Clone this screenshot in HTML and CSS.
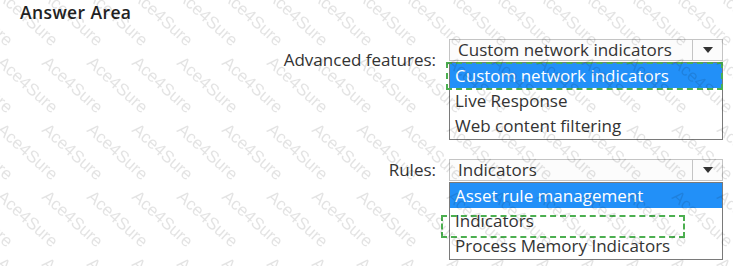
FILE: index.html
```html
<!DOCTYPE html>
<html lang="en">
<head>
    <meta charset='utf-8'>
    <title>Answer Area</title>
    <link rel="stylesheet" href="styles.css">
</head>
<body>

<h1 class="title">Answer Area</h1>

<div class="answers">
    <div class="field">
        <span class="label label-low">Advanced features:</span>
        <div class="picker">
            <div class="select">
                <span class="value">Custom network indicators</span>
                <span class="arrow"></span>
            </div>
            <ul class="list">
                <li class="option selected">Custom network indicators<span class="mark mark-first"></span></li>
                <li class="option">Live Response</li>
                <li class="option">Web content filtering</li>
            </ul>
        </div>
    </div>

    <div class="field">
        <span class="label">Rules:</span>
        <div class="picker">
            <div class="select">
                <span class="value">Indicators</span>
                <span class="arrow"></span>
            </div>
            <ul class="list">
                <li class="option selected">Asset rule management</li>
                <li class="option">Indicators<span class="mark mark-second"></span></li>
                <li class="option">Process Memory Indicators</li>
            </ul>
        </div>
    </div>
</div>

<!-- watermark over everything -->
<svg class="watermark" xmlns="http://www.w3.org/2000/svg">
    <defs>
        <pattern id="wm" width="45" height="67" patternUnits="userSpaceOnUse">
            <g class="wm-text">
                <text transform="translate(41 64) rotate(42)">Ace4Sure</text>
                <text transform="translate(-4 64) rotate(42)">Ace4Sure</text>
                <text transform="translate(-49 64) rotate(42)">Ace4Sure</text>
                <text transform="translate(41 -3) rotate(42)">Ace4Sure</text>
                <text transform="translate(-4 -3) rotate(42)">Ace4Sure</text>
                <text transform="translate(-49 -3) rotate(42)">Ace4Sure</text>
            </g>
        </pattern>
    </defs>
    <rect width="100%" height="100%" fill="url(#wm)"/>
</svg>

</body>
</html>
```

FILE: styles.css
```css
body {
    margin: 0;
    background: #FFFFFF;
    font-family: "Open Sans", sans-serif;
    color: #333333;
    position: relative;
    min-height: 266px;
}

.title {
    margin: 0;
    padding: 2px 20px 0;
    font-size: 17.5px;
    font-weight: 600;
    letter-spacing: 0.4px;
    line-height: 20px;
    color: #222222;
}

.answers {
    display: flex;
    flex-direction: column;
    gap: 19px;
    margin-top: 17px;
}

.field {
    display: flex;
    align-items: flex-start;
    gap: 13px;
}

.label {
    width: 436px;
    text-align: right;
    font-size: 17px;
    line-height: 22px;
}

.label-low {
    padding-top: 10px;
}

.picker {
    width: 274px;
}

.select {
    display: flex;
    height: 20px;
    border: 1px solid #c4c4c4;
    background: #FCFCFC;
    font-size: 17px;
    line-height: 20px;
}

.select .value {
    flex: 1;
    padding-left: 8px;
}

.select .arrow {
    width: 29px;
    border-left: 1px solid #c4c4c4;
    display: flex;
    align-items: center;
    justify-content: center;
}

.select .arrow::before {
    content: "";
    border-left: 5px solid transparent;
    border-right: 5px solid transparent;
    border-top: 6px solid #333333;
}

.list {
    list-style: none;
    margin: 1px 0 0;
    padding: 0 0 1px;
    border: 1px solid #7a7a7a;
    background: #FFFFFF;
}

.option {
    position: relative;
    padding-left: 5px;
    font-size: 17px;
    line-height: 25px;
    height: 25px;
}

.option.selected {
    background: #2290f8;
    color: #FFFFFF;
}

.mark {
    position: absolute;
    border: 2px dashed #4caf50;
    pointer-events: none;
}

.mark-first {
    top: -1px;
    left: -4px;
    right: -1px;
    height: 24px;
}

.mark-second {
    top: 7px;
    left: -9px;
    width: 240px;
    height: 19px;
}

.watermark {
    position: absolute;
    top: 0;
    left: 0;
    width: 100%;
    height: 100%;
    pointer-events: none;
}

.wm-text text {
    font-family: "Liberation Sans", sans-serif;
    font-size: 17px;
    fill: #000000;
    fill-opacity: 0.11;
}
```
